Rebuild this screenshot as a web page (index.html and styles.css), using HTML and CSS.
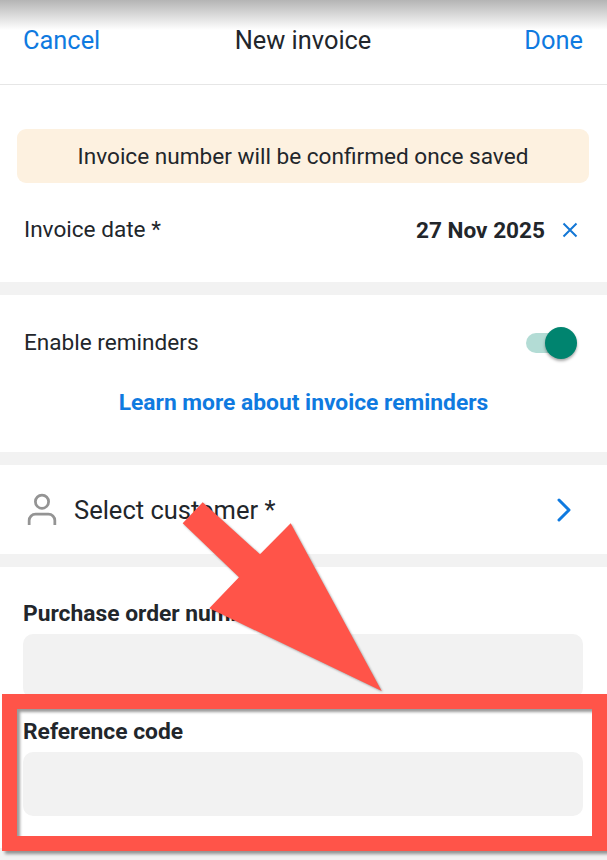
FILE: index.html
```html
<!DOCTYPE html>
<html>

<head>
    <link rel="stylesheet" href="styles.css">
</head>

<body>
    <div class="top-shade"></div>
    <header class="nav">
        <span class="nav-link">Cancel</span>
        <h1 class="nav-title">New invoice</h1>
        <span class="nav-link nav-link-right">Done</span>
    </header>

    <section class="section section-date">
        <div class="banner">Invoice number will be confirmed once saved</div>
        <div class="row">
            <span class="row-label">Invoice date *</span>
            <span class="date-value">
                <strong>27 Nov 2025</strong>
                <svg class="icon-close" viewBox="0 0 16 16"><path d="M1.5 1.5l13 13M14.5 1.5l-13 13" /></svg>
            </span>
        </div>
    </section>

    <section class="section section-reminders">
        <div class="row">
            <span class="row-label">Enable reminders</span>
            <span class="toggle"><span class="toggle-knob"></span></span>
        </div>
        <div class="learn-more">Learn more about invoice reminders</div>
    </section>

    <section class="section section-customer">
        <svg class="icon-person" viewBox="0 0 32 36">
            <circle cx="16" cy="9.5" r="7.2" />
            <path d="M2 35v-5a7 7 0 0 1 7-7h14a7 7 0 0 1 7 7v5" />
        </svg>
        <span class="customer-label">Select customer *</span>
        <svg class="icon-chevron" viewBox="0 0 14 24"><path d="M2 2l10 10L2 22" /></svg>
    </section>

    <section class="section section-fields">
        <label class="field-label">Purchase order number</label>
        <div class="field-input"></div>
        <label class="field-label field-label-second">Reference code</label>
        <div class="field-input"></div>
    </section>

    <!-- annotation drawn over the form -->
    <svg class="arrow" viewBox="0 0 607 860">
        <polygon points="202.7,502.3 182.7,523.3 239,577.3 209.3,608.3 381.7,691 290.7,523.3 260,554.3" />
    </svg>
    <div class="highlight"></div>
</body>

</html>
```

FILE: styles.css
```css
* {
    box-sizing: border-box;
}

html,
body {
    height: 100%;
}

body {
    position: relative;
    margin: 0;
    overflow: hidden;
    background-color: #f2f2f2;
    font-family: Roboto, "Liberation Sans", sans-serif;
    color: #22262b;
}

.top-shade {
    position: absolute;
    top: 0;
    left: 0;
    width: 100%;
    height: 30px;
    background: linear-gradient(#b4b4b4, #ffffff);
}

.nav {
    display: grid;
    grid-template-columns: 1fr auto 1fr;
    height: 85px;
    padding: 25px 24px 0 23px;
    background-color: #fff;
    border-bottom: 1px solid #e6e6e6;
}

.nav-link {
    position: relative;
    font-size: 25.4px;
    line-height: 30px;
    color: #0f7ae0;
}

.nav-link-right {
    text-align: right;
}

.nav-title {
    position: relative;
    margin: 0;
    font-size: 25.4px;
    font-weight: 400;
    line-height: 30px;
}

.section {
    background-color: #fff;
}

.section-date {
    height: 197px;
    padding: 44px 17px 0 17px;
    margin-bottom: 13px;
}

.banner {
    height: 54px;
    margin-right: 1px;
    border-radius: 9px;
    background-color: #fdf1e0;
    font-size: 22.6px;
    line-height: 56px;
    text-align: center;
}

.row {
    display: flex;
    align-items: center;
    justify-content: space-between;
}

.section-date .row {
    margin-top: 29px;
    padding: 0 12px 0 7px;
}

.row-label {
    font-size: 22.6px;
    line-height: 36px;
}

.date-value {
    display: flex;
    align-items: center;
    gap: 17px;
    font-size: 22.6px;
}

.icon-close {
    width: 16px;
    height: 16px;
    fill: none;
    stroke: #1377d6;
    stroke-width: 2;
}

.section-reminders {
    height: 157px;
    padding: 30px 24px 0;
    margin-bottom: 13px;
}

.toggle {
    position: relative;
    display: block;
    width: 49px;
    height: 20px;
    margin-right: 8px;
    border-radius: 10px;
    background-color: #b3dcd5;
}

.toggle-knob {
    position: absolute;
    top: -6px;
    right: -2px;
    width: 32px;
    height: 32px;
    border-radius: 50%;
    background-color: #00846f;
    box-shadow: 0 2px 3px rgba(0, 0, 0, 0.35);
}

.learn-more {
    margin-top: 26px;
    font-size: 22.8px;
    font-weight: 700;
    line-height: 32px;
    text-align: center;
    color: #0f7ae0;
}

.section-customer {
    display: flex;
    align-items: center;
    height: 89px;
    padding: 0 24px 0 27px;
    margin-bottom: 13px;
}

.icon-person {
    width: 30px;
    height: 33px;
    fill: none;
    stroke: #949494;
    stroke-width: 3;
}

.customer-label {
    margin-top: 1px;
    margin-left: 17px;
    font-size: 25.5px;
}

.icon-chevron {
    width: 14px;
    height: 24px;
    margin-left: auto;
    margin-right: 12px;
    fill: none;
    stroke: #0f7ae0;
    stroke-width: 3;
    stroke-linecap: round;
    stroke-linejoin: round;
}

.section-fields {
    height: 281px;
    padding: 32px 24px 0 23px;
}

.field-label {
    display: block;
    font-size: 22.8px;
    font-weight: 700;
    line-height: 30px;
}

.field-label-second {
    margin-top: 19px;
}

.field-input {
    height: 64px;
    margin-top: 5px;
    border-radius: 10px;
    background-color: #f2f2f2;
}

.arrow {
    position: absolute;
    top: 0;
    left: 0;
    width: 607px;
    height: 860px;
    fill: #ff5449;
    filter: drop-shadow(1px 1px 1px rgba(0, 0, 0, 0.35));
}

.highlight {
    position: absolute;
    top: 694px;
    left: 2px;
    width: 605px;
    height: 157px;
    border: 15px solid #ff5449;
    box-shadow: 3px 3px 3px rgba(0, 0, 0, 0.4), inset 3px 3px 3px rgba(0, 0, 0, 0.4);
}
```
